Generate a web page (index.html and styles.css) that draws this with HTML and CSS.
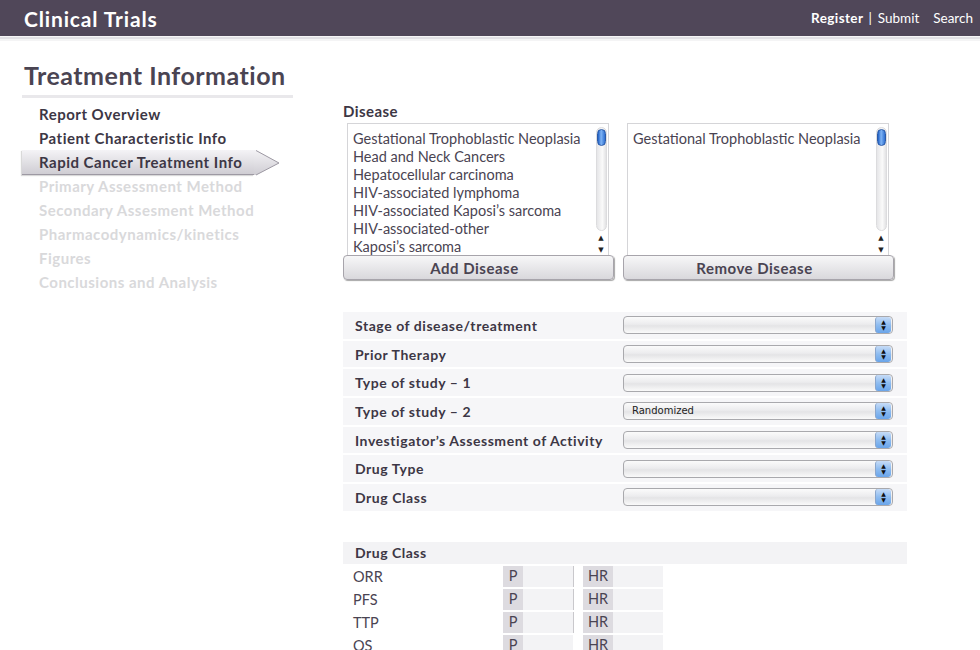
FILE: index.html
```html
<!DOCTYPE html>
<html lang="en">
<head>
<meta charset="utf-8">
<title>Clinical Trials</title>
<link rel="stylesheet" href="styles.css">
</head>
<body>
<header class="topbar">
  <div class="brand">Clinical Trials</div>
  <nav class="topnav">
    <a class="tn-strong" href="#">Register</a>
    <span class="tn-sep">|</span>
    <a href="#">Submit</a>
    <a class="tn-search" href="#">Search</a>
  </nav>
</header>
<div class="stripe"></div>

<h1 class="title">Treatment Information</h1>

<div class="page">
  <aside class="side">
    <ul class="steps">
      <li class="step done">Report Overview</li>
      <li class="step done">Patient Characteristic Info</li>
      <li class="step active"><span class="active-bar">Rapid Cancer Treatment Info</span><svg class="arrow" width="26" height="26" viewBox="0 0 26 26"><defs><linearGradient id="ag" x1="0" y1="0" x2="0" y2="1"><stop offset="0" stop-color="#f4f3f6"/><stop offset="1" stop-color="#cfcdd3"/></linearGradient></defs><path d="M0 0 H2 L25 13 L2 25 H0 Z" fill="url(#ag)"/><path d="M2 0.5 L25 13 L2 25" fill="none" stroke="#9d99a3" stroke-width="1"/></svg></li>
      <li class="step off">Primary Assessment Method</li>
      <li class="step off">Secondary Assesment Method</li>
      <li class="step off">Pharmacodynamics/kinetics</li>
      <li class="step off">Figures</li>
      <li class="step off">Conclusions and Analysis</li>
    </ul>
  </aside>

  <main class="content">
    <div class="disease-label">Disease</div>
    <div class="pickers">
      <div class="picker">
        <div class="listbox">
          <ul class="options">
            <li>Gestational Trophoblastic Neoplasia</li>
            <li>Head and Neck Cancers</li>
            <li>Hepatocellular carcinoma</li>
            <li>HIV-associated lymphoma</li>
            <li>HIV-associated Kaposi’s sarcoma</li>
            <li>HIV-associated-other</li>
            <li>Kaposi’s sarcoma</li>
          </ul>
          <div class="sbar"><div class="track"><div class="thumb"></div></div><div class="sarr">▲</div><div class="sarr">▼</div></div>
        </div>
        <button class="btn" type="button">Add Disease</button>
      </div>
      <div class="picker">
        <div class="listbox">
          <ul class="options">
            <li>Gestational Trophoblastic Neoplasia</li>
          </ul>
          <div class="sbar"><div class="track"><div class="thumb"></div></div><div class="sarr">▲</div><div class="sarr">▼</div></div>
        </div>
        <button class="btn" type="button">Remove Disease</button>
      </div>
    </div>

    <div class="fields">
      <div class="frow"><span class="flabel">Stage of disease/treatment</span><div class="sel"><span class="sel-val"></span><span class="sel-btn">▲<br>▼</span></div></div>
      <div class="frow"><span class="flabel">Prior Therapy</span><div class="sel"><span class="sel-val"></span><span class="sel-btn">▲<br>▼</span></div></div>
      <div class="frow"><span class="flabel">Type of study – 1</span><div class="sel"><span class="sel-val"></span><span class="sel-btn">▲<br>▼</span></div></div>
      <div class="frow"><span class="flabel">Type of study – 2</span><div class="sel"><span class="sel-val">Randomized</span><span class="sel-btn">▲<br>▼</span></div></div>
      <div class="frow"><span class="flabel">Investigator’s Assessment of Activity</span><div class="sel"><span class="sel-val"></span><span class="sel-btn">▲<br>▼</span></div></div>
      <div class="frow"><span class="flabel">Drug Type</span><div class="sel"><span class="sel-val"></span><span class="sel-btn">▲<br>▼</span></div></div>
      <div class="frow"><span class="flabel">Drug Class</span><div class="sel"><span class="sel-val"></span><span class="sel-btn">▲<br>▼</span></div></div>
    </div>

    <div class="outcomes">
      <div class="ohead">Drug Class</div>
      <div class="orow"><span class="oname">ORR</span><span class="cell cp"><span class="tag">P</span></span><span class="vline"></span><span class="cell chr"><span class="tag tag-hr">HR</span></span></div>
      <div class="orow"><span class="oname">PFS</span><span class="cell cp"><span class="tag">P</span></span><span class="vline"></span><span class="cell chr"><span class="tag tag-hr">HR</span></span></div>
      <div class="orow"><span class="oname">TTP</span><span class="cell cp"><span class="tag">P</span></span><span class="vline"></span><span class="cell chr"><span class="tag tag-hr">HR</span></span></div>
      <div class="orow"><span class="oname">OS</span><span class="cell cp"><span class="tag">P</span></span><span class="vline blank"></span><span class="cell chr"><span class="tag tag-hr">HR</span></span></div>
    </div>
  </main>
</div>
</body>
</html>
```

FILE: styles.css
```css
* { box-sizing: border-box; }
html, body { margin: 0; padding: 0; }
body {
  font-family: Lato, "Open Sans", "DejaVu Sans", sans-serif;
  background: #fff;
  color: #3d3745;
  width: 980px;
  height: 650px;
  overflow: hidden;
}

.topbar {
  height: 36px;
  background: #504759;
  display: flex;
  align-items: center;
  justify-content: space-between;
  padding: 0 7px 0 24px;
}
.brand {
  color: #fff;
  font-weight: 700;
  font-size: 21px;
  letter-spacing: 0.85px;
}
.topnav {
  display: flex;
  align-items: center;
  font-size: 13.5px;
  color: #fff;
}
.topnav a { color: #fff; text-decoration: none; }
.tn-strong { font-weight: 700; letter-spacing: 0.4px; }
.tn-sep { margin: 0 6px 0 5px; }
.tn-search { margin-left: 14px; }
.stripe {
  height: 5px;
  background: linear-gradient(#f6f6f7 0, #f6f6f7 1px, #e2e1e5 1px, #e2e1e5 3px, #f4f4f5 3px);
}

.title {
  margin: 19px 0 0 22px;
  width: 271px;
  font-size: 25px;
  letter-spacing: 0.5px;
  font-weight: 700;
  color: #4a4452;
  padding: 0 0 5px 2px;
  line-height: 30px;
  border-bottom: 3px solid #e9e8eb;
  white-space: nowrap;
}

.page {
  display: flex;
  margin-top: 4px;
}
.side {
  width: 343px;
  flex: none;
  padding-left: 22px;
}
.steps {
  list-style: none;
  margin: 0;
  padding: 0;
}
.step {
  height: 24px;
  line-height: 24px;
  font-size: 15px;
  letter-spacing: 0.5px;
  font-weight: 700;
  padding-left: 17px;
  white-space: nowrap;
}
.step.done { color: #3d3745; }
.step.off { color: #d9d9db; }
.step.active {
  padding-left: 0;
  display: flex;
  height: 25px;
  margin-bottom: -1px;
}
.active-bar {
  width: 232px;
  height: 25px;
  padding-left: 17px;
  background: linear-gradient(#f4f3f6, #cfcdd3);
  border-bottom: 1px solid #9d99a3;
  color: #3d3745;
  box-shadow: -1px 1px 1px rgba(0,0,0,0.15);
}
.arrow { display: block; flex: none; }

.content {
  width: 564px;
}
.disease-label {
  margin-top: 0;
  height: 21px;
  line-height: 18px;
  font-size: 15px;
  letter-spacing: 0.45px;
  font-weight: 700;
}
.pickers {
  display: flex;
  gap: 9px;
}
.picker {
  width: 271px;
  display: flex;
  flex-direction: column;
}
.listbox {
  margin: 0 5px 0 4px;
  height: 133px;
  border: 1px solid #d5d5d8;
  border-bottom: none;
  display: flex;
  background: #fff;
}
.options {
  flex: 1;
  list-style: none;
  margin: 0;
  padding: 6px 0 0 5px;
  font-size: 14.5px;
  line-height: 18px;
  color: #4a4452;
  overflow: hidden;
}
.options li { white-space: nowrap; }
.sbar {
  width: 12px;
  margin-right: 1px;
  display: flex;
  flex-direction: column;
  align-items: center;
  padding-top: 3px;
}
.track {
  width: 11px;
  height: 104px;
  border-radius: 6px;
  background: linear-gradient(90deg, #e6e6e8, #fafafa 60%, #e2e2e4);
  border: 1px solid #dcdcde;
  padding: 1px 0 0 0;
}
.thumb {
  width: 9px;
  height: 17px;
  border-radius: 5px;
  background: linear-gradient(90deg, #1f5fc4, #7fb4f5 45%, #2e6fd0);
  border: 1px solid #2a5aa8;
}
.sarr {
  font-size: 7px;
  line-height: 12px;
  height: 12px;
  color: #222;
}
.btn {
  height: 25px;
  width: 271px;
  margin-top: -1px;
  border: 1px solid #a7a4ab;
  border-radius: 4px;
  background: linear-gradient(#f7f7f8, #d9d8dc);
  box-shadow: 1px 1px 1px rgba(0,0,0,0.35);
  font-family: inherit;
  font-weight: 700;
  font-size: 15px;
  letter-spacing: 0.5px;
  color: #4a4452;
  padding: 0 8px 0 0;
}

.fields {
  margin-top: 32px;
  display: flex;
  flex-direction: column;
  gap: 2px;
}
.frow {
  height: 26.7px;
  background: #f6f6f8;
  display: flex;
  align-items: center;
  justify-content: space-between;
  padding: 0 14px 0 12px;
}
.flabel {
  font-size: 14px;
  letter-spacing: 0.55px;
  font-weight: 700;
  color: #3d3745;
  white-space: nowrap;
}
.sel {
  width: 270px;
  height: 18px;
  border: 1px solid #a9a9ad;
  border-radius: 4px;
  background: linear-gradient(#fbfbfb 0%, #ececee 45%, #e4e4e6 55%, #fafafa 100%);
  display: flex;
  align-items: center;
  overflow: hidden;
}
.sel-val {
  flex: 1;
  font-family: "DejaVu Sans", sans-serif;
  font-size: 10px;
  color: #222;
  padding-left: 8px;
  line-height: 16px;
}
.sel-btn {
  width: 16px;
  height: 16px;
  margin-right: 1px;
  border-radius: 3px;
  background: linear-gradient(#c7dcf7, #8ebcf0 50%, #6aa5ea);
  border-left: 1px solid #8aa6cc;
  font-size: 6px;
  line-height: 6px;
  color: #111;
  text-align: center;
  padding-top: 2px;
}

.outcomes {
  margin-top: 31px;
}
.ohead {
  height: 22px;
  line-height: 22px;
  background: #f3f3f5;
  padding-left: 12px;
  font-size: 14px;
  letter-spacing: 0.5px;
  font-weight: 700;
  color: #3d3745;
}
.orow {
  display: flex;
  align-items: stretch;
  height: 21px;
  margin-top: 2px;
}
.oname {
  width: 160px;
  padding-left: 10px;
  font-size: 14.5px;
  line-height: 22px;
  color: #4a4452;
}
.cell {
  background: #f3f3f5;
  display: flex;
}
.cp { width: 70px; }
.chr { width: 80px; }
.tag {
  width: 20px;
  background: #dddbe0;
  font-size: 14.5px;
  line-height: 20px;
  color: #4a4452;
  text-align: center;
}
.tag-hr { width: 30px; }
.vline {
  width: 10px;
}
.vline::before {
  content: "";
  display: block;
  width: 1px;
  height: 100%;
  background: #c9c8cc;
}
.vline.blank::before { background: transparent; }
```
